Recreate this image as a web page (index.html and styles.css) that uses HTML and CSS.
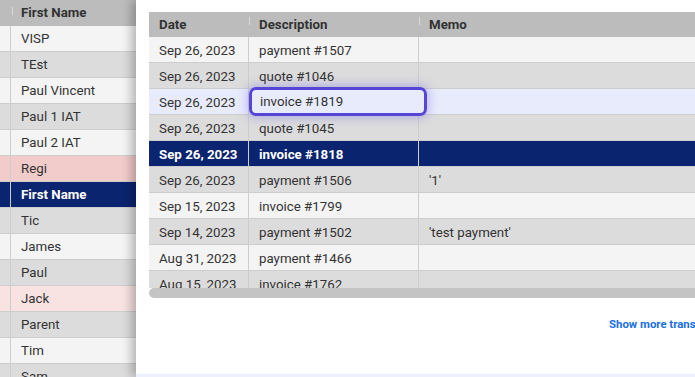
FILE: index.html
```html
<!DOCTYPE html>
<html>
<head>
  <title>Customers</title>
  <link rel="stylesheet" href="styles.css">
</head>
<body>
  <div class="people">
    <div class="prow head"><div class="lead"><span class="tick"></span></div><div class="name">First Name</div></div>
    <div class="prow light"><div class="lead"></div><div class="name">VISP</div></div>
    <div class="prow dark"><div class="lead"></div><div class="name">TEst</div></div>
    <div class="prow light"><div class="lead"></div><div class="name">Paul Vincent</div></div>
    <div class="prow dark"><div class="lead"></div><div class="name">Paul 1 IAT</div></div>
    <div class="prow light"><div class="lead"></div><div class="name">Paul 2 IAT</div></div>
    <div class="prow pink"><div class="lead"></div><div class="name">Regi</div></div>
    <div class="prow picked"><div class="lead"></div><div class="name">First Name</div></div>
    <div class="prow dark"><div class="lead"></div><div class="name">Tic</div></div>
    <div class="prow light"><div class="lead"></div><div class="name">James</div></div>
    <div class="prow dark"><div class="lead"></div><div class="name">Paul</div></div>
    <div class="prow blush"><div class="lead"></div><div class="name">Jack</div></div>
    <div class="prow dark"><div class="lead"></div><div class="name">Parent</div></div>
    <div class="prow light"><div class="lead"></div><div class="name">Tim</div></div>
    <div class="prow dark"><div class="lead"></div><div class="name">Sam</div></div>
  </div>

  <div class="panel">
    <div class="grid">
      <div class="rows">
        <div class="row head">
          <div class="cell date">Date</div>
          <div class="cell desc"><span class="tick"></span>Description</div>
          <div class="cell memo"><span class="tick"></span>Memo</div>
        </div>
        <div class="row light"><div class="cell date">Sep 26, 2023</div><div class="cell desc">payment #1507</div><div class="cell memo"></div></div>
        <div class="row dark"><div class="cell date">Sep 26, 2023</div><div class="cell desc">quote #1046</div><div class="cell memo"></div></div>
        <div class="row hover"><div class="cell date">Sep 26, 2023</div><div class="cell desc focus">invoice #1819</div><div class="cell memo"></div></div>
        <div class="row dark"><div class="cell date">Sep 26, 2023</div><div class="cell desc">quote #1045</div><div class="cell memo"></div></div>
        <div class="row picked"><div class="cell date">Sep 26, 2023</div><div class="cell desc">invoice #1818</div><div class="cell memo"></div></div>
        <div class="row dark"><div class="cell date">Sep 26, 2023</div><div class="cell desc">payment #1506</div><div class="cell memo">'1'</div></div>
        <div class="row light"><div class="cell date">Sep 15, 2023</div><div class="cell desc">invoice #1799</div><div class="cell memo"></div></div>
        <div class="row dark"><div class="cell date">Sep 14, 2023</div><div class="cell desc">payment #1502</div><div class="cell memo">'test payment'</div></div>
        <div class="row light"><div class="cell date">Aug 31, 2023</div><div class="cell desc">payment #1466</div><div class="cell memo"></div></div>
        <div class="row dark"><div class="cell date">Aug 15, 2023</div><div class="cell desc">invoice #1762</div><div class="cell memo"></div></div>
      </div>
      <div class="scrollbar"></div>
    </div>
    <div class="more">
      <a href="#">Show more transactions</a>
    </div>
    <div class="foot"></div>
  </div>
</body>
</html>
```

FILE: styles.css
```css
body {
  margin: 0;
  height: 377px;
  overflow: hidden;
  position: relative;
  font-family: Roboto, "Liberation Sans", sans-serif;
  font-size: 13.3px;
  color: #333;
  background-color: #fff;
}

.tick {
  display: inline-block;
  width: 1px;
  height: 8px;
  background-color: #d9d9d9;
}

/* list behind the panel */
.people {
  width: 180px;
}

.prow {
  display: flex;
  height: 26px;
  border-bottom: 1px solid #cdcdcd;
  box-sizing: border-box;
}

.prow .lead {
  width: 10px;
  border-right: 1px solid #cdcdcd;
  position: relative;
}

.prow.head .lead {
  border-right: none;
  width: 11px;
}

.prow.head .tick {
  position: absolute;
  right: -2px;
  top: 7px;
}

.prow .name {
  flex: 1;
  padding-left: 10px;
  line-height: 25px;
}

.prow.head {
  background-color: #bcbcbc;
  font-weight: bold;
  border-bottom: none;
  height: 26px;
}

.light { background-color: #f4f4f4; }
.dark { background-color: #dcdcdc; }
.pink { background-color: #f2cbcb; }
.blush { background-color: #f8e2e2; }

.picked {
  background-color: #0b2470;
  color: #fff;
  font-weight: bold;
}

/* transactions panel */
.panel {
  position: absolute;
  left: 136px;
  top: 0;
  right: 0;
  bottom: 0;
  background-color: #fff;
  box-shadow: -4px 0 10px rgba(0, 0, 0, 0.28);
  padding: 12px 0 0 13px;
  display: flex;
  flex-direction: column;
}

.grid {
  width: 560px;
  height: 286px;
  display: flex;
  flex-direction: column;
}

.rows {
  height: 276px;
  overflow: hidden;
}

.row {
  display: flex;
  height: 26px;
  box-sizing: border-box;
  border-bottom: 1px solid #cdcdcd;
}

.row.head {
  height: 25px;
  background-color: #bcbcbc;
  font-weight: bold;
  border-bottom: none;
}

.row.hover {
  background-color: #e8ebfb;
}

.cell {
  padding-left: 10px;
  line-height: 27px;
  box-sizing: border-box;
  white-space: nowrap;
  position: relative;
}

.row.head .cell {
  line-height: 25px;
}

.cell.date {
  width: 100px;
  border-right: 1px solid #cdcdcd;
}

.cell.desc {
  width: 170px;
  border-right: 1px solid #cdcdcd;
}

.cell.memo {
  flex: 1;
}

.row.head .cell {
  border-right: none;
}

.row.head .tick {
  position: absolute;
  left: 0;
  top: 5px;
}

.cell.focus {
  border: 3px solid #5546d6;
  border-radius: 7px;
  margin: -2px -8px -2px 0;
  width: 178px;
  height: 29px;
  padding-left: 8px;
  line-height: 23px;
  box-shadow: 0 0 10px 2px rgba(100, 90, 230, 0.35);
  z-index: 1;
}

.scrollbar {
  height: 10px;
  background-color: #c4c4c4;
  border-radius: 5px 0 0 5px;
}

.more {
  display: flex;
  justify-content: flex-end;
  padding-top: 19px;
  height: 60px;
  margin-right: -80px;
}

.more a {
  color: #1a6fe2;
  font-size: 11.4px;
  font-weight: bold;
  text-decoration: none;
  width: 166px;
  white-space: nowrap;
}

.foot {
  margin-top: auto;
  margin-left: -13px;
  height: 3px;
  background-color: #eef0fc;
}
```
